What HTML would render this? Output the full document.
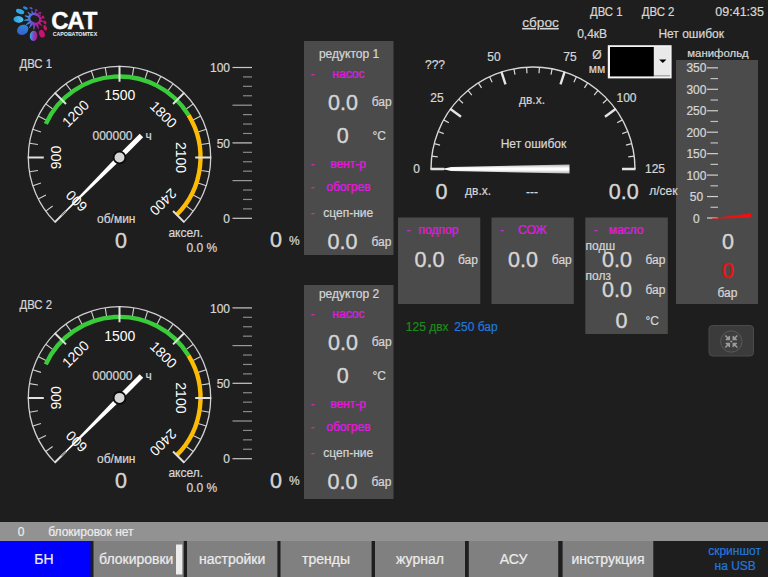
<!DOCTYPE html><html><head><meta charset="utf-8"><title>САТ</title>
<style>html,body{margin:0;padding:0;background:#1e1e1e;overflow:hidden}svg{display:block}text{font-family:"Liberation Sans",sans-serif;}</style></head><body>
<svg width="768" height="577" viewBox="0 0 768 577">
<defs><linearGradient id="lg" gradientUnits="userSpaceOnUse" x1="24" y1="0" x2="45" y2="0"><stop offset="0" stop-color="#2bb4ea"/><stop offset="0.45" stop-color="#6a4fd0"/><stop offset="0.7" stop-color="#b8189a"/><stop offset="1" stop-color="#d80f5c"/></linearGradient><linearGradient id="e2" x1="0" y1="0" x2="1" y2="0"><stop offset="0" stop-color="#2a9ede"/><stop offset="1" stop-color="#58c4f4"/></linearGradient><linearGradient id="e3" x1="1" y1="0" x2="0" y2="1"><stop offset="0" stop-color="#2a8ede"/><stop offset="1" stop-color="#3a58c8"/></linearGradient><linearGradient id="e4" x1="0" y1="0" x2="1" y2="0"><stop offset="0" stop-color="#2fb2ea"/><stop offset="0.5" stop-color="#7a48c8"/><stop offset="1" stop-color="#c8107a"/></linearGradient><linearGradient id="nd" x1="0" y1="0" x2="0" y2="1"><stop offset="0" stop-color="#b4b4b4"/><stop offset="0.4" stop-color="#ffffff"/><stop offset="0.6" stop-color="#ffffff"/><stop offset="1" stop-color="#b4b4b4"/></linearGradient></defs>
<rect x="0" y="0" width="768" height="577" fill="#1e1e1e"/>
<g id="logo">
<ellipse cx="20.1" cy="11.5" rx="4.3" ry="2.4" fill="#2ea8e4" transform="rotate(20 20.1 11.5)"/>
<ellipse cx="18.5" cy="19.4" rx="5" ry="3.3" fill="url(#e2)" transform="rotate(5 18.5 19.4)"/>
<ellipse cx="22.7" cy="29.8" rx="5.9" ry="4.85" fill="url(#e3)" transform="rotate(-30 22.7 29.8)"/>
<ellipse cx="41.9" cy="33.8" rx="2.8" ry="4" fill="#c61272" transform="rotate(-20 41.9 33.8)"/>
<ellipse cx="45.2" cy="27.9" rx="1.7" ry="2.9" fill="#d0105a" transform="rotate(-25 45.2 27.9)"/>
<ellipse cx="44.9" cy="22.4" rx="1.4" ry="2.1" fill="#cc1066" transform="rotate(-30 44.9 22.4)"/>
<ellipse cx="43.1" cy="17.2" rx="1.25" ry="1.7" fill="#c41078" transform="rotate(-40 43.1 17.2)"/>
<ellipse cx="40" cy="13" rx="1.25" ry="1.25" fill="#b01590" transform="rotate(0 40 13)"/>
<ellipse cx="36.2" cy="10.2" rx="1.4" ry="1" fill="#8a30b0" transform="rotate(30 36.2 10.2)"/>
<ellipse cx="31" cy="8.2" rx="1.7" ry="1" fill="#5a58c8" transform="rotate(25 31 8.2)"/>
<ellipse cx="25.4" cy="8" rx="2.6" ry="1.25" fill="#2a88d8" transform="rotate(25 25.4 8)"/>
<ellipse cx="33.6" cy="35.9" rx="3.8" ry="5.2" fill="url(#e4)" transform="rotate(5 33.6 35.9)"/>
<path d="M33.92 14.38L35.47 11.28L36.45 14.61ZM35.97 14.45L38.34 12.93L38.15 15.75ZM37.78 15.40L40.62 15.04L39.19 17.51ZM39.01 17.04L42.53 17.83L39.35 19.55ZM39.40 19.05L43.37 21.66L38.62 21.46ZM38.88 21.03L42.09 25.84L37.13 22.87ZM37.55 22.59L38.57 28.86L35.18 23.48ZM35.68 23.42L33.86 29.60L33.15 23.19ZM33.63 23.35L29.38 28.02L31.45 22.05ZM31.82 22.40L26.05 24.71L30.41 20.29ZM30.59 20.76L24.42 20.33L30.25 18.25ZM30.20 18.75L25.00 15.74L30.98 16.34ZM30.72 16.77L27.75 12.19L32.47 14.93ZM32.05 15.21L31.71 10.72L34.42 14.32Z" fill="url(#lg)" stroke="url(#lg)" stroke-width="0.6" stroke-linejoin="round"/>
<ellipse cx="34.8" cy="18.9" rx="5.6" ry="4.6" fill="#1e1e1e" stroke="url(#lg)" stroke-width="2.3" transform="rotate(25 34.8 18.9)"/>
</g>
<text x="51.3" y="28.5" font-size="24" fill="#ffffff" font-family="Liberation Sans,sans-serif" font-weight="bold" letter-spacing="-0.7" stroke="#ffffff" stroke-width="0.4">САТ</text>
<text x="52.8" y="36.3" font-size="6" fill="#f0f0f0" font-family="Liberation Sans,sans-serif" font-weight="bold" textLength="44.4" lengthAdjust="spacingAndGlyphs">САРОВАТОМТЕХ</text>
<text x="19.5" y="68.0" font-size="12" fill="#d6d6d6" textLength="32.5" lengthAdjust="spacingAndGlyphs" stroke="#d6d6d6" stroke-width="0.22">ДВС 1</text>
<g>
<path d="M55.01 221.99A91.2 91.2 0 1 1 183.99 221.99" fill="none" stroke="#d0d0d0" stroke-width="1.3"/>
<path d="M45.72 211.11L52.68 206.05M38.24 198.90L45.90 195.00M32.76 185.68L40.94 183.02M29.42 171.77L37.92 170.42M29.42 143.23L37.92 144.58M32.76 129.32L40.94 131.98M38.24 116.10L45.90 120.00M45.72 103.89L52.68 108.95M65.89 83.72L70.95 90.68M78.10 76.24L82.00 83.90M91.32 70.76L93.98 78.94M105.23 67.42L106.58 75.92M133.77 67.42L132.42 75.92M147.68 70.76L145.02 78.94M160.90 76.24L157.00 83.90M173.11 83.72L168.05 90.68M193.28 103.89L186.32 108.95M200.76 116.10L193.10 120.00M206.24 129.32L198.06 131.98M209.58 143.23L201.08 144.58M209.58 171.77L201.08 170.42M206.24 185.68L198.06 183.02M200.76 198.90L193.10 195.00M193.28 211.11L186.32 206.05" stroke="#d0d0d0" stroke-width="1.1" fill="none"/>
<path d="M45.79 123.91A81 81 0 0 1 188.56 115.18" fill="none" stroke="#3acb3a" stroke-width="4.4"/>
<path d="M188.56 115.18A81 81 0 0 1 176.78 214.78" fill="none" stroke="#fcbc05" stroke-width="4.4"/>
<path d="M54.66 222.34L65.97 211.03M27.80 157.50L43.80 157.50M54.66 92.66L65.97 103.97M119.50 65.80L119.50 81.80M184.34 92.66L173.03 103.97M211.20 157.50L195.20 157.50M184.34 222.34L173.03 211.03" stroke="#e0e0e0" stroke-width="2" fill="none"/>
<text transform="translate(76.37 201.13) rotate(-135)" font-family="Liberation Sans,sans-serif" font-size="14" fill="#ffffff" text-anchor="middle" y="5">600</text>
<text transform="translate(56.00 157.50) rotate(-90)" font-family="Liberation Sans,sans-serif" font-size="14" fill="#ffffff" text-anchor="middle" y="5">900</text>
<text transform="translate(75.47 113.57) rotate(-45)" font-family="Liberation Sans,sans-serif" font-size="14" fill="#ffffff" text-anchor="middle" y="5">1200</text>
<text transform="translate(119.80 95.25) rotate(0)" font-family="Liberation Sans,sans-serif" font-size="14" fill="#ffffff" text-anchor="middle" y="5">1500</text>
<text transform="translate(163.63 114.37) rotate(45)" font-family="Liberation Sans,sans-serif" font-size="14" fill="#ffffff" text-anchor="middle" y="5">1800</text>
<text transform="translate(180.50 157.50) rotate(90)" font-family="Liberation Sans,sans-serif" font-size="14" fill="#ffffff" text-anchor="middle" y="5">2100</text>
<text transform="translate(163.23 202.03) rotate(135)" font-family="Liberation Sans,sans-serif" font-size="14" fill="#ffffff" text-anchor="middle" y="5">2400</text>
<g transform="translate(119.5 157.5) rotate(135)"><polygon points="-31,-2.5 0,-2.5 76,-0.7 76,0.7 0,2.5 -31,2.5" fill="#ffffff"/><path d="M76 0L82 0" stroke="#777" stroke-width="1"/></g>
<circle cx="119.5" cy="157.5" r="5.9" fill="#d4d4d4" stroke="#0a0a0a" stroke-width="1.8"/>
</g>
<text x="92.5" y="139.8" font-size="12" fill="#d6d6d6" stroke="#d6d6d6" stroke-width="0.22">000000</text>
<text x="145.5" y="139.8" font-size="12" fill="#d6d6d6" stroke="#d6d6d6" stroke-width="0.22">ч</text>
<text x="97" y="222.5" font-size="12" fill="#d6d6d6" stroke="#d6d6d6" stroke-width="0.22">об/мин</text>
<text x="121" y="248" font-size="21.5" fill="#d6d6d6" text-anchor="middle" stroke="#d6d6d6" stroke-width="0.4">0</text>
<text x="168.4" y="237" font-size="12" fill="#d6d6d6" stroke="#d6d6d6" stroke-width="0.22">аксел.</text>
<text x="186.4" y="252" font-size="12" fill="#d6d6d6" stroke="#d6d6d6" stroke-width="0.22">0.0 %</text>
<path d="M232.5 218.30H252" stroke="#c8c8c8" stroke-width="1.2"/>
<path d="M243 208.88H252" stroke="#8a8a8a" stroke-width="1.2"/>
<path d="M243 199.45H252" stroke="#8a8a8a" stroke-width="1.2"/>
<path d="M243 190.03H252" stroke="#8a8a8a" stroke-width="1.2"/>
<path d="M232.5 180.60H252" stroke="#9a9a9a" stroke-width="1.2"/>
<path d="M243 171.18H252" stroke="#8a8a8a" stroke-width="1.2"/>
<path d="M243 161.75H252" stroke="#8a8a8a" stroke-width="1.2"/>
<path d="M243 152.32H252" stroke="#8a8a8a" stroke-width="1.2"/>
<path d="M232.5 142.90H252" stroke="#c8c8c8" stroke-width="1.2"/>
<path d="M243 133.48H252" stroke="#8a8a8a" stroke-width="1.2"/>
<path d="M243 124.05H252" stroke="#8a8a8a" stroke-width="1.2"/>
<path d="M243 114.62H252" stroke="#8a8a8a" stroke-width="1.2"/>
<path d="M232.5 105.20H252" stroke="#9a9a9a" stroke-width="1.2"/>
<path d="M243 95.78H252" stroke="#8a8a8a" stroke-width="1.2"/>
<path d="M243 86.35H252" stroke="#8a8a8a" stroke-width="1.2"/>
<path d="M243 76.93H252" stroke="#8a8a8a" stroke-width="1.2"/>
<path d="M232.5 67.50H252" stroke="#c8c8c8" stroke-width="1.2"/>
<text x="230" y="72.2" font-size="12" fill="#d6d6d6" text-anchor="end" stroke="#d6d6d6" stroke-width="0.22">100</text>
<text x="230" y="147.6" font-size="12" fill="#d6d6d6" text-anchor="end" stroke="#d6d6d6" stroke-width="0.22">50</text>
<text x="230" y="223.0" font-size="12" fill="#d6d6d6" text-anchor="end" stroke="#d6d6d6" stroke-width="0.22">0</text>
<text x="276" y="247.2" font-size="21.5" fill="#d6d6d6" text-anchor="middle" stroke="#d6d6d6" stroke-width="0.4">0</text>
<text x="288.9" y="244.7" font-size="12" fill="#d6d6d6" stroke="#d6d6d6" stroke-width="0.22">%</text>
<text x="19.5" y="309.0" font-size="12" fill="#d6d6d6" textLength="32.5" lengthAdjust="spacingAndGlyphs" stroke="#d6d6d6" stroke-width="0.22">ДВС 2</text>
<g>
<path d="M55.01 462.39A91.2 91.2 0 1 1 183.99 462.39" fill="none" stroke="#d0d0d0" stroke-width="1.3"/>
<path d="M45.72 451.51L52.68 446.45M38.24 439.30L45.90 435.40M32.76 426.08L40.94 423.42M29.42 412.17L37.92 410.82M29.42 383.63L37.92 384.98M32.76 369.72L40.94 372.38M38.24 356.50L45.90 360.40M45.72 344.29L52.68 349.35M65.89 324.12L70.95 331.08M78.10 316.64L82.00 324.30M91.32 311.16L93.98 319.34M105.23 307.82L106.58 316.32M133.77 307.82L132.42 316.32M147.68 311.16L145.02 319.34M160.90 316.64L157.00 324.30M173.11 324.12L168.05 331.08M193.28 344.29L186.32 349.35M200.76 356.50L193.10 360.40M206.24 369.72L198.06 372.38M209.58 383.63L201.08 384.98M209.58 412.17L201.08 410.82M206.24 426.08L198.06 423.42M200.76 439.30L193.10 435.40M193.28 451.51L186.32 446.45" stroke="#d0d0d0" stroke-width="1.1" fill="none"/>
<path d="M45.79 364.31A81 81 0 0 1 188.56 355.58" fill="none" stroke="#3acb3a" stroke-width="4.4"/>
<path d="M188.56 355.58A81 81 0 0 1 176.78 455.18" fill="none" stroke="#fcbc05" stroke-width="4.4"/>
<path d="M54.66 462.74L65.97 451.43M27.80 397.90L43.80 397.90M54.66 333.06L65.97 344.37M119.50 306.20L119.50 322.20M184.34 333.06L173.03 344.37M211.20 397.90L195.20 397.90M184.34 462.74L173.03 451.43" stroke="#e0e0e0" stroke-width="2" fill="none"/>
<text transform="translate(76.37 441.53) rotate(-135)" font-family="Liberation Sans,sans-serif" font-size="14" fill="#ffffff" text-anchor="middle" y="5">600</text>
<text transform="translate(56.00 397.90) rotate(-90)" font-family="Liberation Sans,sans-serif" font-size="14" fill="#ffffff" text-anchor="middle" y="5">900</text>
<text transform="translate(75.47 353.97) rotate(-45)" font-family="Liberation Sans,sans-serif" font-size="14" fill="#ffffff" text-anchor="middle" y="5">1200</text>
<text transform="translate(119.80 335.65) rotate(0)" font-family="Liberation Sans,sans-serif" font-size="14" fill="#ffffff" text-anchor="middle" y="5">1500</text>
<text transform="translate(163.63 354.77) rotate(45)" font-family="Liberation Sans,sans-serif" font-size="14" fill="#ffffff" text-anchor="middle" y="5">1800</text>
<text transform="translate(180.50 397.90) rotate(90)" font-family="Liberation Sans,sans-serif" font-size="14" fill="#ffffff" text-anchor="middle" y="5">2100</text>
<text transform="translate(163.23 442.43) rotate(135)" font-family="Liberation Sans,sans-serif" font-size="14" fill="#ffffff" text-anchor="middle" y="5">2400</text>
<g transform="translate(119.5 397.9) rotate(135)"><polygon points="-31,-2.5 0,-2.5 76,-0.7 76,0.7 0,2.5 -31,2.5" fill="#ffffff"/><path d="M76 0L82 0" stroke="#777" stroke-width="1"/></g>
<circle cx="119.5" cy="397.9" r="5.9" fill="#d4d4d4" stroke="#0a0a0a" stroke-width="1.8"/>
</g>
<text x="92.5" y="380.20000000000005" font-size="12" fill="#d6d6d6" stroke="#d6d6d6" stroke-width="0.22">000000</text>
<text x="145.5" y="380.20000000000005" font-size="12" fill="#d6d6d6" stroke="#d6d6d6" stroke-width="0.22">ч</text>
<text x="97" y="462.9" font-size="12" fill="#d6d6d6" stroke="#d6d6d6" stroke-width="0.22">об/мин</text>
<text x="121" y="488.4" font-size="21.5" fill="#d6d6d6" text-anchor="middle" stroke="#d6d6d6" stroke-width="0.4">0</text>
<text x="168.4" y="477.4" font-size="12" fill="#d6d6d6" stroke="#d6d6d6" stroke-width="0.22">аксел.</text>
<text x="186.4" y="492.4" font-size="12" fill="#d6d6d6" stroke="#d6d6d6" stroke-width="0.22">0.0 %</text>
<path d="M232.5 458.70H252" stroke="#c8c8c8" stroke-width="1.2"/>
<path d="M243 449.28H252" stroke="#8a8a8a" stroke-width="1.2"/>
<path d="M243 439.85H252" stroke="#8a8a8a" stroke-width="1.2"/>
<path d="M243 430.43H252" stroke="#8a8a8a" stroke-width="1.2"/>
<path d="M232.5 421.00H252" stroke="#9a9a9a" stroke-width="1.2"/>
<path d="M243 411.58H252" stroke="#8a8a8a" stroke-width="1.2"/>
<path d="M243 402.15H252" stroke="#8a8a8a" stroke-width="1.2"/>
<path d="M243 392.73H252" stroke="#8a8a8a" stroke-width="1.2"/>
<path d="M232.5 383.30H252" stroke="#c8c8c8" stroke-width="1.2"/>
<path d="M243 373.88H252" stroke="#8a8a8a" stroke-width="1.2"/>
<path d="M243 364.45H252" stroke="#8a8a8a" stroke-width="1.2"/>
<path d="M243 355.02H252" stroke="#8a8a8a" stroke-width="1.2"/>
<path d="M232.5 345.60H252" stroke="#9a9a9a" stroke-width="1.2"/>
<path d="M243 336.17H252" stroke="#8a8a8a" stroke-width="1.2"/>
<path d="M243 326.75H252" stroke="#8a8a8a" stroke-width="1.2"/>
<path d="M243 317.32H252" stroke="#8a8a8a" stroke-width="1.2"/>
<path d="M232.5 307.90H252" stroke="#c8c8c8" stroke-width="1.2"/>
<text x="230" y="312.59999999999997" font-size="12" fill="#d6d6d6" text-anchor="end" stroke="#d6d6d6" stroke-width="0.22">100</text>
<text x="230" y="388.0" font-size="12" fill="#d6d6d6" text-anchor="end" stroke="#d6d6d6" stroke-width="0.22">50</text>
<text x="230" y="463.40000000000003" font-size="12" fill="#d6d6d6" text-anchor="end" stroke="#d6d6d6" stroke-width="0.22">0</text>
<text x="276" y="487.6" font-size="21.5" fill="#d6d6d6" text-anchor="middle" stroke="#d6d6d6" stroke-width="0.4">0</text>
<text x="288.9" y="485.1" font-size="12" fill="#d6d6d6" stroke="#d6d6d6" stroke-width="0.22">%</text>
<rect x="304" y="41" width="89.5" height="214" fill="#4b4b4b"/>
<text x="349" y="57.5" font-size="12" fill="#d6d6d6" text-anchor="middle" stroke="#d6d6d6" stroke-width="0.22">редуктор 1</text>
<text x="310.8" y="77.9" font-size="12" fill="#c62ac6" stroke="#c62ac6" stroke-width="0.22">-</text>
<text x="348.4" y="77.9" font-size="12" fill="#e814e8" text-anchor="middle" stroke="#e814e8" stroke-width="0.22">насос</text>
<text x="343" y="109.5" font-size="21.5" fill="#d6d6d6" text-anchor="middle" stroke="#d6d6d6" stroke-width="0.4">0.0</text>
<text x="371.7" y="105.8" font-size="12" fill="#d6d6d6" stroke="#d6d6d6" stroke-width="0.22">бар</text>
<text x="342.8" y="142.8" font-size="21.5" fill="#d6d6d6" text-anchor="middle" stroke="#d6d6d6" stroke-width="0.4">0</text>
<text x="372.5" y="140.1" font-size="12" fill="#d6d6d6" stroke="#d6d6d6" stroke-width="0.22">°C</text>
<text x="310.8" y="167.5" font-size="12" fill="#c62ac6" stroke="#c62ac6" stroke-width="0.22">-</text>
<text x="348" y="167.5" font-size="12" fill="#e814e8" text-anchor="middle" stroke="#e814e8" stroke-width="0.22">вент-р</text>
<text x="310.8" y="190.5" font-size="12" fill="#c62ac6" stroke="#c62ac6" stroke-width="0.22">-</text>
<text x="348.4" y="190.5" font-size="12" fill="#e814e8" text-anchor="middle" stroke="#e814e8" stroke-width="0.22">обогрев</text>
<text x="310.8" y="216.5" font-size="12" fill="#c62ac6" stroke="#c62ac6" stroke-width="0.22">-</text>
<text x="348.2" y="216.5" font-size="12" fill="#d6d6d6" text-anchor="middle" stroke="#d6d6d6" stroke-width="0.22">сцеп-ние</text>
<text x="342.5" y="249.2" font-size="21.5" fill="#d6d6d6" text-anchor="middle" stroke="#d6d6d6" stroke-width="0.4">0.0</text>
<text x="371.5" y="245.5" font-size="12" fill="#d6d6d6" stroke="#d6d6d6" stroke-width="0.22">бар</text>
<rect x="304" y="285" width="89.5" height="214" fill="#4b4b4b"/>
<text x="349" y="297.5" font-size="12" fill="#d6d6d6" text-anchor="middle" stroke="#d6d6d6" stroke-width="0.22">редуктор 2</text>
<text x="310.8" y="317.9" font-size="12" fill="#c62ac6" stroke="#c62ac6" stroke-width="0.22">-</text>
<text x="348.4" y="317.9" font-size="12" fill="#e814e8" text-anchor="middle" stroke="#e814e8" stroke-width="0.22">насос</text>
<text x="343" y="349.5" font-size="21.5" fill="#d6d6d6" text-anchor="middle" stroke="#d6d6d6" stroke-width="0.4">0.0</text>
<text x="371.7" y="345.8" font-size="12" fill="#d6d6d6" stroke="#d6d6d6" stroke-width="0.22">бар</text>
<text x="342.8" y="382.8" font-size="21.5" fill="#d6d6d6" text-anchor="middle" stroke="#d6d6d6" stroke-width="0.4">0</text>
<text x="372.5" y="380.1" font-size="12" fill="#d6d6d6" stroke="#d6d6d6" stroke-width="0.22">°C</text>
<text x="310.8" y="407.5" font-size="12" fill="#c62ac6" stroke="#c62ac6" stroke-width="0.22">-</text>
<text x="348" y="407.5" font-size="12" fill="#e814e8" text-anchor="middle" stroke="#e814e8" stroke-width="0.22">вент-р</text>
<text x="310.8" y="430.5" font-size="12" fill="#c62ac6" stroke="#c62ac6" stroke-width="0.22">-</text>
<text x="348.4" y="430.5" font-size="12" fill="#e814e8" text-anchor="middle" stroke="#e814e8" stroke-width="0.22">обогрев</text>
<text x="310.8" y="456.5" font-size="12" fill="#c62ac6" stroke="#c62ac6" stroke-width="0.22">-</text>
<text x="348.2" y="456.5" font-size="12" fill="#d6d6d6" text-anchor="middle" stroke="#d6d6d6" stroke-width="0.22">сцеп-ние</text>
<text x="342.5" y="489.2" font-size="21.5" fill="#d6d6d6" text-anchor="middle" stroke="#d6d6d6" stroke-width="0.4">0.0</text>
<text x="371.5" y="485.5" font-size="12" fill="#d6d6d6" stroke="#d6d6d6" stroke-width="0.22">бар</text>
<rect x="676" y="60" width="82" height="244" fill="#4b4b4b"/>
<path d="M431 169A102 102 0 0 1 635 169" fill="none" stroke="#d8d8d8" stroke-width="1.4"/>
<path d="M431.80 156.22L437.76 156.97M434.20 143.63L440.02 145.13M438.16 131.45L443.74 133.66M443.62 119.86L448.87 122.75M458.65 99.18L463.02 103.28M467.98 90.41L471.81 95.03M478.35 82.88L481.56 87.94M489.57 76.71L492.13 82.14M513.89 68.81L515.01 74.70M526.60 67.20L526.97 73.19M539.40 67.20L539.03 73.19M552.11 68.81L550.99 74.70M576.43 76.71L573.87 82.14M587.65 82.88L584.44 87.94M598.02 90.41L594.19 95.03M607.35 99.18L602.98 103.28M622.38 119.86L617.13 122.75M627.84 131.45L622.26 133.66M631.80 143.63L625.98 145.13M634.20 156.22L628.24 156.97" stroke="#d8d8d8" stroke-width="1.2" fill="none"/>
<path d="M430.50 169.00L444.00 169.00M450.08 108.75L461.00 116.69M501.33 71.52L505.50 84.36M564.67 71.52L560.50 84.36M615.92 108.75L605.00 116.69M635.50 169.00L622.00 169.00" stroke="#e4e4e4" stroke-width="2.4" fill="none"/>
<polygon points="569.5,164.6 569.5,173.4 451,171.1 445.5,169.7 445.5,168.3 451,166.9" fill="url(#nd)"/>
<path d="M431 169H446" stroke="#e0e0e0" stroke-width="1.6"/>
<text x="416.5" y="172.5" font-size="12" fill="#d6d6d6" text-anchor="middle" stroke="#d6d6d6" stroke-width="0.22">0</text>
<text x="437" y="101.5" font-size="12" fill="#d6d6d6" text-anchor="middle" stroke="#d6d6d6" stroke-width="0.22">25</text>
<text x="494" y="60.8" font-size="12" fill="#d6d6d6" text-anchor="middle" stroke="#d6d6d6" stroke-width="0.22">50</text>
<text x="570" y="60.6" font-size="12" fill="#d6d6d6" text-anchor="middle" stroke="#d6d6d6" stroke-width="0.22">75</text>
<text x="626.5" y="101.5" font-size="12" fill="#d6d6d6" text-anchor="middle" stroke="#d6d6d6" stroke-width="0.22">100</text>
<text x="655" y="172.5" font-size="12" fill="#d6d6d6" text-anchor="middle" stroke="#d6d6d6" stroke-width="0.22">125</text>
<text x="435" y="68.5" font-size="12" fill="#d6d6d6" text-anchor="middle" stroke="#d6d6d6" stroke-width="0.22">???</text>
<text x="532" y="103.8" font-size="12" fill="#d6d6d6" text-anchor="middle" stroke="#d6d6d6" stroke-width="0.22">дв.х.</text>
<text x="533.5" y="147.5" font-size="12" fill="#d6d6d6" text-anchor="middle" stroke="#d6d6d6" stroke-width="0.22">Нет ошибок</text>
<text x="540.5" y="27" font-size="13.6" fill="#d6d6d6" text-anchor="middle" text-decoration="underline" stroke="#d6d6d6" stroke-width="0.22">сброс</text>
<text x="441.5" y="199" font-size="21.5" fill="#d6d6d6" text-anchor="middle" stroke="#d6d6d6" stroke-width="0.4">0</text>
<text x="465" y="195.3" font-size="12" fill="#d6d6d6" stroke="#d6d6d6" stroke-width="0.22">дв.х.</text>
<text x="532" y="196" font-size="12" fill="#d6d6d6" text-anchor="middle" stroke="#d6d6d6" stroke-width="0.22">---</text>
<text x="623.7" y="199" font-size="21.5" fill="#d6d6d6" text-anchor="middle" stroke="#d6d6d6" stroke-width="0.4">0.0</text>
<text x="649.2" y="195.3" font-size="12" fill="#d6d6d6" textLength="28.2" lengthAdjust="spacingAndGlyphs" stroke="#d6d6d6" stroke-width="0.22">л/сек</text>
<text x="590" y="16" font-size="12" fill="#d6d6d6" textLength="32.5" lengthAdjust="spacingAndGlyphs" stroke="#d6d6d6" stroke-width="0.22">ДВС 1</text>
<text x="641.7" y="16" font-size="12" fill="#d6d6d6" textLength="32.7" lengthAdjust="spacingAndGlyphs" stroke="#d6d6d6" stroke-width="0.22">ДВС 2</text>
<text x="764" y="16" font-size="12.5" fill="#d6d6d6" text-anchor="end" stroke="#d6d6d6" stroke-width="0.22">09:41:35</text>
<text x="577.2" y="38" font-size="12" fill="#d6d6d6" stroke="#d6d6d6" stroke-width="0.22">0,4кВ</text>
<text x="658.4" y="38" font-size="12" fill="#d6d6d6" stroke="#d6d6d6" stroke-width="0.22">Нет ошибок</text>
<text x="718" y="56.7" font-size="11.4" fill="#d6d6d6" text-anchor="middle" stroke="#d6d6d6" stroke-width="0.22">манифольд</text>
<text x="597" y="59.3" font-size="12" fill="#d6d6d6" text-anchor="middle" stroke="#d6d6d6" stroke-width="0.22">Ø</text>
<text x="597" y="73.4" font-size="12" fill="#d6d6d6" text-anchor="middle" stroke="#d6d6d6" stroke-width="0.22">мм</text>
<rect x="607.8" y="45.2" width="63.8" height="33.2" fill="#f4f4f4"/>
<rect x="654" y="47" width="16" height="29.4" fill="#9a9a9a"/>
<rect x="654" y="47" width="16" height="28.2" fill="#e9e9e9"/>
<rect x="610" y="47" width="43.8" height="29.4" fill="#000000"/>
<path d="M659.2 59.5h7.2l-3.6 3.6z" fill="#000"/>
<path d="M707 218.00H718" stroke="#d0d0d0" stroke-width="1.2"/>
<text x="696.4" y="222.6" font-size="12" fill="#d6d6d6" text-anchor="middle" stroke="#d6d6d6" stroke-width="0.22">0</text>
<path d="M710.5 207.28H718" stroke="#c0c0c0" stroke-width="1.2"/>
<path d="M707 196.55H718" stroke="#d0d0d0" stroke-width="1.2"/>
<text x="696.4" y="201.15" font-size="12" fill="#d6d6d6" text-anchor="middle" stroke="#d6d6d6" stroke-width="0.22">50</text>
<path d="M710.5 185.82H718" stroke="#c0c0c0" stroke-width="1.2"/>
<path d="M707 175.10H718" stroke="#d0d0d0" stroke-width="1.2"/>
<text x="696.4" y="179.7" font-size="12" fill="#d6d6d6" text-anchor="middle" stroke="#d6d6d6" stroke-width="0.22">100</text>
<path d="M710.5 164.38H718" stroke="#c0c0c0" stroke-width="1.2"/>
<path d="M707 153.65H718" stroke="#d0d0d0" stroke-width="1.2"/>
<text x="696.4" y="158.25" font-size="12" fill="#d6d6d6" text-anchor="middle" stroke="#d6d6d6" stroke-width="0.22">150</text>
<path d="M710.5 142.93H718" stroke="#c0c0c0" stroke-width="1.2"/>
<path d="M707 132.20H718" stroke="#d0d0d0" stroke-width="1.2"/>
<text x="696.4" y="136.79999999999998" font-size="12" fill="#d6d6d6" text-anchor="middle" stroke="#d6d6d6" stroke-width="0.22">200</text>
<path d="M710.5 121.48H718" stroke="#c0c0c0" stroke-width="1.2"/>
<path d="M707 110.75H718" stroke="#d0d0d0" stroke-width="1.2"/>
<text x="696.4" y="115.35" font-size="12" fill="#d6d6d6" text-anchor="middle" stroke="#d6d6d6" stroke-width="0.22">250</text>
<path d="M710.5 100.03H718" stroke="#c0c0c0" stroke-width="1.2"/>
<path d="M707 89.30H718" stroke="#d0d0d0" stroke-width="1.2"/>
<text x="696.4" y="93.9" font-size="12" fill="#d6d6d6" text-anchor="middle" stroke="#d6d6d6" stroke-width="0.22">300</text>
<path d="M710.5 78.58H718" stroke="#c0c0c0" stroke-width="1.2"/>
<path d="M707 67.85H718" stroke="#d0d0d0" stroke-width="1.2"/>
<text x="696.4" y="72.44999999999999" font-size="12" fill="#d6d6d6" text-anchor="middle" stroke="#d6d6d6" stroke-width="0.22">350</text>
<polygon points="712,218.2 751,213.3 751,217.8 712,218.8" fill="#ee1111"/>
<text x="728" y="248.5" font-size="21.5" fill="#d6d6d6" text-anchor="middle" stroke="#d6d6d6" stroke-width="0.4">0</text>
<text x="728" y="277.5" font-size="21.5" fill="#ee1111" text-anchor="middle" stroke="#ee1111" stroke-width="0.4">0</text>
<text x="727.5" y="297" font-size="12" fill="#d6d6d6" text-anchor="middle" stroke="#d6d6d6" stroke-width="0.22">бар</text>
<rect x="709" y="325.5" width="44.5" height="30.5" rx="3.5" fill="#3b3b3b" stroke="#4a4a4a" stroke-width="1"/>
<circle cx="731.3" cy="341.5" r="10.7" fill="#3e3e3e" stroke="#5a5a5a" stroke-width="1"/>
<g fill="#9a9a9a" stroke="#9a9a9a" stroke-width="1.2" stroke-linejoin="round">
<g transform="translate(731.3 341.5) scale(-1 -1)"><path d="M2 2L6 6" fill="none" stroke-width="1.6"/><path d="M1.8 1.8h3.4l-3.4 3.4z"/></g>
<g transform="translate(731.3 341.5) scale(1 -1)"><path d="M2 2L6 6" fill="none" stroke-width="1.6"/><path d="M1.8 1.8h3.4l-3.4 3.4z"/></g>
<g transform="translate(731.3 341.5) scale(-1 1)"><path d="M2 2L6 6" fill="none" stroke-width="1.6"/><path d="M1.8 1.8h3.4l-3.4 3.4z"/></g>
<g transform="translate(731.3 341.5) scale(1 1)"><path d="M2 2L6 6" fill="none" stroke-width="1.6"/><path d="M1.8 1.8h3.4l-3.4 3.4z"/></g>
<circle cx="731.3" cy="341.5" r="1.1" stroke="none"/></g>
<rect x="398" y="217.5" width="82.3" height="86.5" fill="#4b4b4b"/>
<rect x="491.5" y="217.5" width="82.3" height="86.5" fill="#4b4b4b"/>
<rect x="585.3" y="217.5" width="82.5" height="116.5" fill="#4b4b4b"/>
<text x="406.5" y="233.6" font-size="12" fill="#c62ac6" stroke="#c62ac6" stroke-width="0.22">-</text>
<text x="438.5" y="233.6" font-size="12" fill="#e814e8" text-anchor="middle" stroke="#e814e8" stroke-width="0.22">подпор</text>
<text x="429.5" y="267" font-size="21.5" fill="#d6d6d6" text-anchor="middle" stroke="#d6d6d6" stroke-width="0.4">0.0</text>
<text x="458" y="264" font-size="12" fill="#d6d6d6" stroke="#d6d6d6" stroke-width="0.22">бар</text>
<text x="500" y="233.6" font-size="12" fill="#c62ac6" stroke="#c62ac6" stroke-width="0.22">-</text>
<text x="532.3" y="233.6" font-size="12" fill="#e814e8" text-anchor="middle" stroke="#e814e8" stroke-width="0.22">СОЖ</text>
<text x="523" y="267" font-size="21.5" fill="#d6d6d6" text-anchor="middle" stroke="#d6d6d6" stroke-width="0.4">0.0</text>
<text x="551.8" y="264" font-size="12" fill="#d6d6d6" stroke="#d6d6d6" stroke-width="0.22">бар</text>
<text x="593.7" y="233.6" font-size="12" fill="#c62ac6" stroke="#c62ac6" stroke-width="0.22">-</text>
<text x="626" y="233.6" font-size="12" fill="#e814e8" text-anchor="middle" stroke="#e814e8" stroke-width="0.22">масло</text>
<text x="585.5" y="249.5" font-size="12" fill="#d6d6d6" stroke="#d6d6d6" stroke-width="0.22">подш</text>
<text x="585.5" y="279.5" font-size="12" fill="#d6d6d6" stroke="#d6d6d6" stroke-width="0.22">полз</text>
<text x="617" y="267" font-size="21.5" fill="#d6d6d6" text-anchor="middle" stroke="#d6d6d6" stroke-width="0.4">0.0</text>
<text x="645.5" y="264" font-size="12" fill="#d6d6d6" stroke="#d6d6d6" stroke-width="0.22">бар</text>
<text x="617" y="297" font-size="21.5" fill="#d6d6d6" text-anchor="middle" stroke="#d6d6d6" stroke-width="0.4">0.0</text>
<text x="645.5" y="294" font-size="12" fill="#d6d6d6" stroke="#d6d6d6" stroke-width="0.22">бар</text>
<text x="621.5" y="327.5" font-size="21.5" fill="#d6d6d6" text-anchor="middle" stroke="#d6d6d6" stroke-width="0.4">0</text>
<text x="645.5" y="324.5" font-size="12" fill="#d6d6d6" stroke="#d6d6d6" stroke-width="0.22">°C</text>
<text x="405.8" y="331.2" font-size="12" fill="#1c8c1c" stroke="#1c8c1c" stroke-width="0.22">125 двх</text>
<text x="454.3" y="331.2" font-size="12" fill="#2277dd" stroke="#2277dd" stroke-width="0.22">250 бар</text>
<rect x="0" y="522" width="768" height="19.2" fill="#929292"/>
<text x="21" y="536" font-size="12" fill="#ececec" text-anchor="middle" stroke="#ececec" stroke-width="0.22">0</text>
<text x="48.2" y="536" font-size="12" fill="#ececec" stroke="#ececec" stroke-width="0.22">блокировок нет</text>
<rect x="0" y="541" width="768" height="36" fill="#1e1e1e"/>
<rect x="0" y="541" width="90.5" height="36" fill="#0000ff"/>
<rect x="93.5" y="541" width="90.19999999999999" height="36" fill="#808080"/>
<rect x="187" y="541" width="90.39999999999998" height="36" fill="#808080"/>
<rect x="280.5" y="541" width="91.10000000000002" height="36" fill="#808080"/>
<rect x="375" y="541" width="90" height="36" fill="#808080"/>
<rect x="468.8" y="541" width="89.40000000000003" height="36" fill="#808080"/>
<rect x="562.6" y="541" width="90.69999999999993" height="36" fill="#808080"/>
<text x="44" y="563.8" font-size="14" fill="#ececec" text-anchor="middle" stroke="#ececec" stroke-width="0.22">БН</text>
<text x="99" y="563.8" font-size="14" fill="#ececec" stroke="#ececec" stroke-width="0.22">блокировки</text>
<rect x="176" y="544.5" width="6.3" height="30" fill="#ececec"/>
<text x="232.2" y="563.8" font-size="14" fill="#ececec" text-anchor="middle" stroke="#ececec" stroke-width="0.22">настройки</text>
<text x="326.05" y="563.8" font-size="14" fill="#ececec" text-anchor="middle" stroke="#ececec" stroke-width="0.22">тренды</text>
<text x="420.0" y="563.8" font-size="14" fill="#ececec" text-anchor="middle" stroke="#ececec" stroke-width="0.22">журнал</text>
<text x="513.5" y="563.8" font-size="14" fill="#ececec" text-anchor="middle" stroke="#ececec" stroke-width="0.22">АСУ</text>
<text x="607.95" y="563.8" font-size="14" fill="#ececec" text-anchor="middle" stroke="#ececec" stroke-width="0.22">инструкция</text>
<text x="734.6" y="555" font-size="12" fill="#2277dd" text-anchor="middle" stroke="#2277dd" stroke-width="0.22">скриншот</text>
<text x="735.2" y="570" font-size="12" fill="#2277dd" text-anchor="middle" stroke="#2277dd" stroke-width="0.22">на USB</text>
</svg></body></html>
